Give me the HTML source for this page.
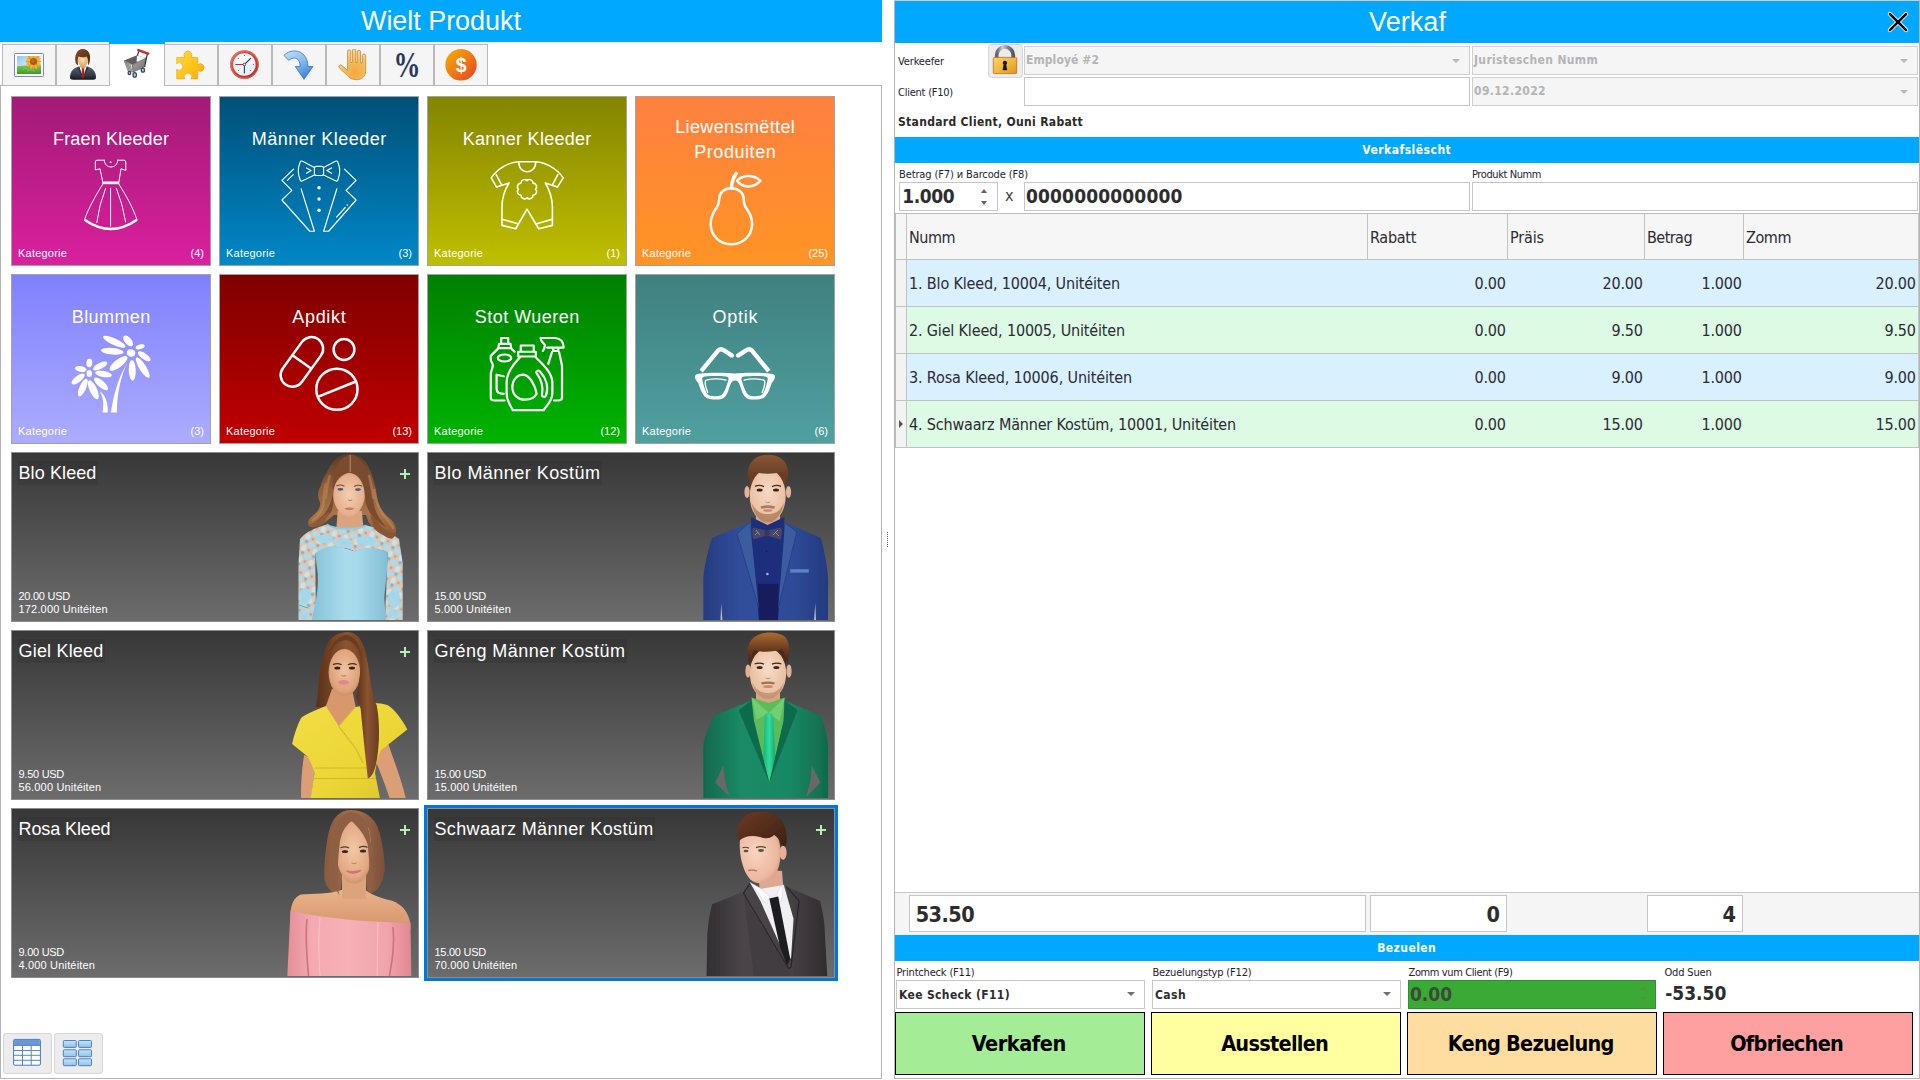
<!DOCTYPE html>
<html lang="lb"><head><meta charset="utf-8"><title>Verkaf</title>
<style>

*{box-sizing:border-box;margin:0;padding:0}
html,body{width:1920px;height:1080px;overflow:hidden;background:#fff}
body{position:relative;font-family:"Liberation Sans",sans-serif}
.a{position:absolute}
.t{position:absolute;white-space:nowrap}
.blue{background:#00a8ff}
.tab{position:absolute;top:44px;width:54px;height:42px;background:#f5f5f5;border:1px solid #b9b9b9}
.tab svg,.tabsel svg{position:absolute;left:10px;top:4px;width:32px;height:32px}
.tabsel{position:absolute;left:110px;top:44px;width:54px;height:42px;background:#fff}
.tabsel svg{left:11px;top:5px}
.cat{position:absolute;width:200px;height:170px;border:1px solid #a3a3a3}
.cat svg{position:absolute;left:0;top:0;width:198px;height:168px}
.prod{position:absolute;width:408px;height:170px;border:1px solid #8d8d8d;background:linear-gradient(#383838,#6c6c6c);overflow:hidden}
.prod svg{position:absolute;right:0;top:0;height:168px}
.lbl{position:absolute;background:rgba(30,30,30,.16)}
.inp{position:absolute;height:29px;background:#fff;border:1px solid #c6c6c6}
.dis{background:#f5f5f5;border-color:#cfcfcf}
.btn{position:absolute;top:1012px;width:250px;height:63px;border:1px solid #000}
.sbtn{position:absolute;background:#ececec;border:1px solid #d6d6d6;border-radius:3px}
.hl{position:absolute;height:1px;background:#c2c2c2}
.vl{position:absolute;width:1px;background:#c2c2c2}
.arr{position:absolute;width:0;height:0;border-left:4px solid transparent;border-right:4px solid transparent;border-top:4px solid #707070}

</style></head>
<body>
<div class="a blue" style="left:0;top:0;width:882px;height:42px"></div>
<div class="a" style="left:0;top:85px;width:882px;height:994px;border:1px solid #b4b4b4"></div>
<div class="tab" style="left:2px"><svg viewBox="0 0 32 32"><defs><clipPath id="pclip"><rect x="4" y="7" width="24" height="18"/></clipPath><linearGradient id="psky" x1="0" y1="0" x2="1" y2="1"><stop offset="0" stop-color="#8cc4f2"/><stop offset=".6" stop-color="#e4f2fc"/></linearGradient><linearGradient id="pgr" x1="0" y1="0" x2="0" y2="1"><stop offset="0" stop-color="#7ec850"/><stop offset="1" stop-color="#3f9a28"/></linearGradient></defs>
<rect x="1.5" y="4.5" width="29" height="23" rx="1" fill="#fff" stroke="#7887c8"/>
<rect x="4" y="7" width="24" height="18" fill="url(#psky)"/>
<path d="M4 17.5C10 15.5 20 17 28 16V25H4Z" fill="url(#pgr)"/>
<g clip-path="url(#pclip)"><ellipse cx="20.5" cy="7.3" rx="1.2" ry="2.8" fill="#f09a28" transform="rotate(0.0 20.5 12.4)"/><ellipse cx="20.5" cy="7.3" rx="1.2" ry="2.8" fill="#f7b535" transform="rotate(22.5 20.5 12.4)"/><ellipse cx="20.5" cy="7.3" rx="1.2" ry="2.8" fill="#f09a28" transform="rotate(45.0 20.5 12.4)"/><ellipse cx="20.5" cy="7.3" rx="1.2" ry="2.8" fill="#f7b535" transform="rotate(67.5 20.5 12.4)"/><ellipse cx="20.5" cy="7.3" rx="1.2" ry="2.8" fill="#f09a28" transform="rotate(90.0 20.5 12.4)"/><ellipse cx="20.5" cy="7.3" rx="1.2" ry="2.8" fill="#f7b535" transform="rotate(112.5 20.5 12.4)"/><ellipse cx="20.5" cy="7.3" rx="1.2" ry="2.8" fill="#f09a28" transform="rotate(135.0 20.5 12.4)"/><ellipse cx="20.5" cy="7.3" rx="1.2" ry="2.8" fill="#f7b535" transform="rotate(157.5 20.5 12.4)"/><ellipse cx="20.5" cy="7.3" rx="1.2" ry="2.8" fill="#f09a28" transform="rotate(180.0 20.5 12.4)"/><ellipse cx="20.5" cy="7.3" rx="1.2" ry="2.8" fill="#f7b535" transform="rotate(202.5 20.5 12.4)"/><ellipse cx="20.5" cy="7.3" rx="1.2" ry="2.8" fill="#f09a28" transform="rotate(225.0 20.5 12.4)"/><ellipse cx="20.5" cy="7.3" rx="1.2" ry="2.8" fill="#f7b535" transform="rotate(247.5 20.5 12.4)"/><ellipse cx="20.5" cy="7.3" rx="1.2" ry="2.8" fill="#f09a28" transform="rotate(270.0 20.5 12.4)"/><ellipse cx="20.5" cy="7.3" rx="1.2" ry="2.8" fill="#f7b535" transform="rotate(292.5 20.5 12.4)"/><ellipse cx="20.5" cy="7.3" rx="1.2" ry="2.8" fill="#f09a28" transform="rotate(315.0 20.5 12.4)"/><ellipse cx="20.5" cy="7.3" rx="1.2" ry="2.8" fill="#f7b535" transform="rotate(337.5 20.5 12.4)"/></g>
<circle cx="20.5" cy="12.4" r="3.5" fill="#a85a1e"/><circle cx="20" cy="11.8" r="2" fill="#c27530" opacity=".7"/>
<path d="M10 21Q13 17.5 15.5 21M14 22.5Q18 19 22 22.5" stroke="#8fcf6a" stroke-width=".8" fill="none" opacity=".8"/>
</svg></div>
<div class="tab" style="left:56px"><svg viewBox="0 0 32 32"><defs><linearGradient id="ubody" x1="0" y1="0" x2="0" y2="1"><stop offset="0" stop-color="#5a6672"/><stop offset=".7" stop-color="#303842"/><stop offset="1" stop-color="#14181c"/></linearGradient><radialGradient id="uface" cx=".45" cy=".4" r=".7"><stop offset="0" stop-color="#fbdcae"/><stop offset="1" stop-color="#d9a066"/></radialGradient><linearGradient id="uhair" x1="0" y1="0" x2="1" y2="1"><stop offset="0" stop-color="#8a4a22"/><stop offset="1" stop-color="#4a2410"/></linearGradient></defs>
<path d="M3 28.5C3 22 7 18.6 12 17.4L16 16.8L20 17.4C25 18.6 29 22 29 28.5Q29 30.7 26 30.7H6Q3 30.7 3 28.5Z" fill="url(#ubody)"/>
<path d="M12.2 17.6L16 29L19.8 17.6L16 16.6Z" fill="#fff"/>
<path d="M14.6 18.6H17.4L17 20.6L17.9 27.3L16 29.6L14.1 27.3L15 20.6Z" fill="#c01818"/>
<path d="M12.2 17.4L10.6 19.2L16 29.4ZM19.8 17.4L21.4 19.2L16 29.4Z" fill="#2c343e"/>
<path d="M13.3 14.5H18.7V18.2L16 19.6L13.3 18.2Z" fill="#d9a066"/>
<ellipse cx="16" cy="11.6" rx="5" ry="5.9" fill="url(#uface)"/>
<path d="M8.6 13.5C7 6 10.5 0.2 15.6 0.1C21 0 24.6 5 22.6 13.2C22.4 14.5 21.6 15.6 21 16.2C21.5 12 21 9.5 19.6 7.4C17 8.6 13.5 8.4 11.6 7.6C10.6 10 10.5 13 11.2 16.4C10 15.8 8.9 14.8 8.6 13.5Z" fill="url(#uhair)"/>
</svg></div>
<div class="tab" style="left:164px"><svg viewBox="0 0 32 32"><defs><linearGradient id="pz" x1="0" y1="0" x2="1" y2="1"><stop offset="0" stop-color="#ffd84a"/><stop offset=".5" stop-color="#ffc61a"/><stop offset="1" stop-color="#f7a810"/></linearGradient></defs>
<path fill-rule="evenodd" d="M1.7 8.5H9.9A3.9 3.9 0 1 1 15.9 8.5H22.7V15.6A3.9 3.9 0 1 1 22.7 21.6V29.9H16A3.7 3.7 0 1 0 9.8 29.9H1.7V20.3A3.7 3.7 0 1 0 1.7 14.7Z" fill="url(#pz)" stroke="#e2a210" stroke-width=".6"/>
</svg></div>
<div class="tab" style="left:218px"><svg viewBox="0 0 32 32"><defs><radialGradient id="ckf" cx=".4" cy=".35" r=".7"><stop offset="0" stop-color="#fff"/><stop offset="1" stop-color="#dfeaf6"/></radialGradient><linearGradient id="ckr" x1="0" y1="0" x2="1" y2="1"><stop offset="0" stop-color="#e8665a"/><stop offset="1" stop-color="#c0241c"/></linearGradient></defs>
<circle cx="15.4" cy="15.5" r="12.8" fill="url(#ckf)" stroke="url(#ckr)" stroke-width="3.1"/>
<circle cx="15.4" cy="15.5" r="13.9" fill="none" stroke="#e8847a" stroke-width=".7" opacity=".8"/>
<g fill="#3a4660"><circle cx="15.4" cy="6.4" r=".5"/><circle cx="24.4" cy="15.5" r=".5"/><circle cx="9.4" cy="9.3" r=".5"/><circle cx="9.4" cy="21.4" r=".5"/><circle cx="21.4" cy="21.4" r=".5"/></g>
<path d="M15.4 15.5H6.2" stroke="#cf2a24" stroke-width="1.1"/>
<path d="M15.4 15.5L21.9 9.1M15.4 15.5V24.5" stroke="#2c3a58" stroke-width="1.1"/>
<circle cx="15.4" cy="15.5" r="1.3" fill="#fff" stroke="#2c3a58" stroke-width=".8"/>
</svg></div>
<div class="tab" style="left:272px"><svg viewBox="0 0 32 32"><defs><linearGradient id="arw" x1="0" y1="0" x2=".6" y2="1"><stop offset="0" stop-color="#c4e2fa"/><stop offset=".5" stop-color="#8cc0ee"/><stop offset="1" stop-color="#3f86d6"/></linearGradient></defs>
<path d="M0.9 6.3C5 2.6 9 1.6 13 2C20 2.8 25 9 25 17.5H30L21 30.4L12.3 17.5H17.1C17 12.5 15 9.6 12.4 9.1C10 8.7 7.5 9.8 5.6 11.3Z" fill="url(#arw)" stroke="#3f74c4" stroke-width=".8" stroke-linejoin="round"/>
</svg></div>
<div class="tab" style="left:326px"><svg viewBox="0 0 32 32"><defs><radialGradient id="hnd" cx=".6" cy=".75" r=".7"><stop offset="0" stop-color="#f0a83c"/><stop offset=".6" stop-color="#f6be62"/><stop offset="1" stop-color="#fbd694"/></radialGradient></defs>
<path d="M10.6 21.4V2.4A1.55 1.55 0 0 1 13.75 2.4V13.5H15.4V1.6A1.7 1.7 0 0 1 18.8 1.6V13.5H20.2V3A1.7 1.7 0 0 1 23.6 3V14H25.3V6.4A1.7 1.7 0 0 1 28.65 6.4V22C28.65 27 25 30.7 19.6 30.7C15 30.7 12.5 29 10.5 26.6L2.4 18.9A1.6 1.6 0 0 1 4.8 16.5Z" fill="url(#hnd)" stroke="#c27a22" stroke-width=".7" stroke-linejoin="round"/>
</svg></div>
<div class="tab" style="left:380px"><svg viewBox="0 0 32 32"><text x="16" y="28.4" text-anchor="middle" font-family="'Liberation Serif',serif" font-weight="bold" font-size="35.5" fill="#2b3a5e" textLength="27" lengthAdjust="spacingAndGlyphs">%</text></svg></div>
<div class="tab" style="left:434px"><svg viewBox="0 0 32 32"><defs><linearGradient id="dol" x1=".1" y1=".15" x2=".9" y2=".9"><stop offset="0" stop-color="#f2a406"/><stop offset=".5" stop-color="#ee7a18"/><stop offset="1" stop-color="#e84a22"/></linearGradient></defs>
<circle cx="16" cy="15.8" r="15.7" fill="url(#dol)"/>
<text x="16.1" y="22.6" text-anchor="middle" font-family="'Liberation Sans',sans-serif" font-weight="bold" font-size="19.5" fill="#fff">$</text>
</svg></div>
<div class="a blue" style="left:109px;top:42px;width:56px;height:2px"></div>
<div class="tabsel"><svg viewBox="0 0 32 32"><defs><linearGradient id="cfr" x1="0" y1="0" x2="1" y2="0"><stop offset="0" stop-color="#9a9a9a"/><stop offset="1" stop-color="#f0f0f0"/></linearGradient><linearGradient id="csd" x1="0" y1="0" x2="1" y2="1"><stop offset="0" stop-color="#a8a8a8"/><stop offset="1" stop-color="#6e6e6e"/></linearGradient></defs>
<path d="M3.1 11.6L16 6.25L25 9.1L11.5 15.8Z" fill="#5d5d5d"/>
<path d="M16 6.25L25 9.1L23.6 15.2L15.6 12.4Z" fill="#f2f2f2"/>
<path d="M3.1 11.6L11.5 15.8L12.1 23.1L7 22Z" fill="url(#cfr)" stroke="#4a4a4a" stroke-width=".5"/>
<path d="M11.5 15.8L25 9.1L22.7 18.6L12.1 23.1Z" fill="url(#csd)" stroke="#4a4a4a" stroke-width=".5"/>
<path d="M5 13L8.3 21.6M6.8 13.8L9.6 22M8.8 14.8L10.9 22.5" stroke="#6a6a6a" stroke-width=".7"/>
<path d="M17.7 2.3L16.4 6.6M26.3 5L23.6 18" stroke="#2e2e36" stroke-width="1.2"/>
<path d="M17.3 1.2L27.3 4.6" stroke="#c8161d" stroke-width="2.3" stroke-linecap="round"/>
<path d="M17.6 .9L27 4" stroke="#e85a5a" stroke-width=".6" stroke-linecap="round"/>
<g stroke="#33485e" stroke-width="1.3" fill="#b4cfe8"><ellipse cx="8.4" cy="24" rx="1.3" ry="1.7"/><ellipse cx="13.75" cy="25.9" rx="1.7" ry="2.2"/><ellipse cx="21.9" cy="21.2" rx="1.6" ry="2"/></g>
</svg></div>
<div class="cat" style="left:11px;top:96px;background:linear-gradient(#a21a76,#da209e)"><svg viewBox="0 0 198 168" fill="none" stroke="#fff" stroke-width="1.0" stroke-linecap="round" stroke-linejoin="round" >
<path d="M92.3 63.2H85Q83.3 63.2 83.3 65V73L88 71.75L90.7 84.7M105.7 63.2H112Q113.8 63.2 113.8 65V73.4L109 71.75L106.9 84.7M92.3 63.2C92.3 72.4 105.7 72.4 105.7 63.2"/>
<rect x="90.3" y="84.5" width="17" height="2.7" fill="#fff" stroke="none"/>
<path d="M90.7 87.2C84 98 76 112 72.75 122.2M106.9 87.2C114 98 121.5 112 124.8 122.2M98.6 91.3V129.2M93.6 91.3Q87 108 84.8 125.5M104.4 91.3Q111 108 113.6 125"/>
<path d="M73.3 123.3Q98.75 140.8 124.2 123.3" stroke-width="2.6"/>
<circle cx="98.6" cy="65.2" r="0.9" fill="#fff" stroke="none"/>
</svg></div>
<div class="cat" style="left:219px;top:96px;background:linear-gradient(#005078,#0088c8)"><svg viewBox="0 0 198 168" fill="none" stroke="#fff" stroke-width="1.15" stroke-linecap="round" stroke-linejoin="round" >
<path d="M94.4 70.5L82.6 64.3Q80.6 63.3 80 65.5Q76.6 73.8 80 82.5Q80.6 84.8 82.6 83.7L94.4 78M103.6 70.5L115.4 64.3Q117.4 63.3 118 65.5Q121.4 73.8 118 82.5Q117.4 84.8 115.4 83.7L103.6 78"/>
<rect x="94.4" y="69.3" width="9.2" height="9.2" rx="2"/>
<path d="M86.5 70.9L91.1 73.4L86.5 76.3M111.5 70.9L106.9 73.4L111.5 76.3"/>
<path d="M73.6 72.2L61.9 83.4L71.9 93.4L61.9 103L89.8 134.25H94.4L81.1 91.75M73.2 77.6L67.3 83.4"/>
<path d="M124.4 72.2L136.1 83.4L126.1 93.4L136.1 103L108.6 134.25H103.6L116.9 91.75M116.5 120.1L125.25 110.5"/>
<g fill="#fff" stroke="none"><circle cx="99" cy="90.7" r="1.7"/><circle cx="99" cy="102" r="1.7"/><circle cx="99" cy="113.2" r="1.7"/><circle cx="127.3" cy="108" r="0.8"/></g>
</svg></div>
<div class="cat" style="left:427px;top:96px;background:linear-gradient(#848400,#bfbf00)"><svg viewBox="0 0 198 168" fill="none" stroke="#fff" stroke-width="1.6" stroke-linecap="round" stroke-linejoin="round" >
<path d="M90.7 64.7C80 65.5 69.5 71.5 63.2 80.9L68.6 90.1L81.1 85.9C76 94 74 102 74 110V128.4L87.75 131.75L99 112.2L110.7 131.75L124.4 128.4V110C124.4 102 122 94 117.3 85.9L129.4 90.1L135.25 80.9C129 71.5 118 65.5 107.75 64.7Z"/>
<path d="M90.7 64.7C90.7 78 107.75 78 107.75 64.7M68.2 77.6L73.2 87.2M129.8 77.6L124.8 87.2M74 122.2L89.8 126.75M124.4 122.2L108.6 126.75"/>
<path d="M107.60 92.20A3.6 3.6 0 0 1 105.08 98.28A3.6 3.6 0 0 1 99.00 100.80A3.6 3.6 0 0 1 92.92 98.28A3.6 3.6 0 0 1 90.40 92.20A3.6 3.6 0 0 1 92.92 86.12A3.6 3.6 0 0 1 99.00 83.60A3.6 3.6 0 0 1 105.08 86.12A3.6 3.6 0 0 1 107.60 92.20Z"/>
</svg></div>
<div class="cat" style="left:635px;top:96px;background:linear-gradient(#ff8040,#ff9424)"><svg viewBox="0 0 198 168" fill="none" stroke="#fff" stroke-width="2.5" stroke-linecap="round" stroke-linejoin="round" >
<path d="M95.25 91.3C88 91.3 83.2 96 83.2 102C83.2 106 83 107 81 110C77 116 74.7 120 74.7 127C74.7 139 84 147.2 95.25 147.2C106.5 147.2 116.1 139 116.1 127C116.1 120 113.5 116 109.5 110C107.7 107 107.75 106 107.75 102C107.75 96 102.5 91.3 95.25 91.3Z"/>
<path d="M95.3 90.8C95.8 85 97.5 80 100.2 76.6" stroke-width="3.4"/>
<path d="M101.1 83.8C106 77.5 117.5 77 124.4 83.8C118 91.5 106 91 101.1 83.8Z"/>
</svg></div>
<div class="cat" style="left:11px;top:274px;background:linear-gradient(#8080ff,#acacff)"><svg viewBox="0 0 198 168" fill="none" stroke="#fff" stroke-width="1.1" stroke-linecap="round" stroke-linejoin="round" ><g fill="#fff" stroke="none"><ellipse cx="119" cy="78" rx="4.3" ry="3.6" transform="rotate(20 119 78)"/><ellipse cx="102.3" cy="66.75" rx="12.2" ry="3.2" transform="rotate(25 102.3 66.75)"/><ellipse cx="116.1" cy="65.9" rx="6.5" ry="3.4" transform="rotate(50 116.1 65.9)"/><ellipse cx="128.2" cy="71.75" rx="4.6" ry="2.4" transform="rotate(-15 128.2 71.75)"/><ellipse cx="100.25" cy="76.3" rx="11.4" ry="3.3" transform="rotate(5 100.25 76.3)"/><ellipse cx="132.3" cy="81.3" rx="7.5" ry="2.9" transform="rotate(35 132.3 81.3)"/><ellipse cx="106.5" cy="88.4" rx="11" ry="3.9" transform="rotate(-38 106.5 88.4)"/><ellipse cx="120.25" cy="95.3" rx="10.4" ry="3.5" transform="rotate(88 120.25 95.3)"/><ellipse cx="130.7" cy="92.6" rx="11.8" ry="3.4" transform="rotate(58 130.7 92.6)"/><ellipse cx="77.3" cy="98.4" rx="2.7" ry="3.5" transform="rotate(0 77.3 98.4)"/><ellipse cx="77.3" cy="88" rx="4.2" ry="2.9" transform="rotate(95 77.3 88)"/><ellipse cx="88.2" cy="90.9" rx="7.9" ry="3" transform="rotate(-27 88.2 90.9)"/><ellipse cx="68.75" cy="94" rx="5.8" ry="2.8" transform="rotate(10 68.75 94)"/><ellipse cx="91.5" cy="99" rx="8.5" ry="3" transform="rotate(10 91.5 99)"/><ellipse cx="66.1" cy="104" rx="7.9" ry="3.2" transform="rotate(-37 66.1 104)"/><ellipse cx="70.8" cy="112.6" rx="9.6" ry="3.3" transform="rotate(-66 70.8 112.6)"/><ellipse cx="81.3" cy="114.8" rx="10.3" ry="3.6" transform="rotate(65 81.3 114.8)"/><ellipse cx="89" cy="108.8" rx="8.9" ry="3.3" transform="rotate(41 89 108.8)"/><path d="M115.7 87.2C108 100 102 115 99 137.6H104.8C105 118 109 100 115.7 87.2Z"/><path d="M87.3 115.9C91.5 121 92 130 90.4 137.6H95.7C96.5 128 93 119 87.3 115.9Z"/></g></svg></div>
<div class="cat" style="left:219px;top:274px;background:linear-gradient(#800000,#c00000)"><svg viewBox="0 0 198 168" fill="none" stroke="#fff" stroke-width="2.5" stroke-linecap="round" stroke-linejoin="round" >
<rect x="70.2" y="58.95" width="23.4" height="55.9" rx="11.7" transform="rotate(36 81.9 86.9)"/>
<path d="M72.75 80.5L91.1 93.4M99 121.3L135.25 106.75"/>
<circle cx="124" cy="74.5" r="10.4"/><circle cx="116.9" cy="114.25" r="20.6"/>
</svg></div>
<div class="cat" style="left:427px;top:274px;background:linear-gradient(#008000,#00b400)"><svg viewBox="0 0 198 168" fill="none" stroke="#fff" stroke-width="2.2" stroke-linecap="round" stroke-linejoin="round" >
<path d="M92.75 76.75V70.5H105.7V76.75M90.25 76.75H107.75V81.5H90.25ZM92.3 81.75C86 89 78.6 97 78.6 108V118C78.6 126 82 130 84.8 135.1H115.7C119 130 124.4 126 124.4 118V108C124.4 97 114 89 107.3 81.75"/>
<path d="M95.7 99.7C88 99.7 84.4 106 84.4 112C84.4 120 90 124.7 97 124.7C103 124.7 107 122 108.6 118.8C107 110 102 101 95.7 99.7Z"/>
<path d="M108.6 98.2C107.6 96.2 110.2 94.6 112 96.6C118 103 121 112 118 120.5C117 122.6 113.5 122 114 119.5C115.5 112 113.5 105 108.6 98.2Z"/>
<path d="M73.2 68.5V63H80.25V68.5M71 68.8H82.5L83.2 73.2H70.25ZM70.25 73.4L62.75 80.9V84C62.75 87 64.8 88 64.8 90.5C64.8 93 62.75 96 62.75 99.7V122.2Q62.75 125.5 66 125.5H76.5M83.2 73.4L86.5 76.75"/>
<ellipse cx="76.5" cy="83" rx="6.7" ry="3.5"/>
<path d="M75.7 101.3L68.6 99.7V114Q68.6 118.8 75.7 118.8"/>
<path d="M112.5 63H127Q135.5 63.5 135.7 72.6H119M112.5 63L113.5 66L117 70Q116.5 74 114.8 75.9M125.25 73V76H130.25V73M124 77.2L120.25 88.8M131.1 77.2L134 90.5V122.2Q134 125.5 130.25 125.5H126.1"/>
</svg></div>
<div class="cat" style="left:635px;top:274px;background:linear-gradient(#408080,#50a0a0)"><svg viewBox="0 0 198 168" fill="none" stroke="#fff" stroke-width="1.3" stroke-linecap="round" stroke-linejoin="round" >
<path fill="#fff" stroke="none" fill-rule="evenodd" d="M59 101.8C59 99.8 60.5 99 63 98.7C76 97.2 90 97.6 99 98.6C108 97.6 122 97.2 135 98.7C137.5 99 139 99.8 139 101.8C139 104.5 137.5 106 135.7 108C134 113 132.5 118 129 122C126 124.6 118 125 113.2 124.25C109 123.2 107 119.5 105.8 116C104.5 112 103.5 108.5 101.8 106.6C100.2 105 97.8 105 96.2 106.6C94.5 108.5 93.5 112 92.2 116C91 119.5 89 123.2 84.8 124.25C80 125 72 124.6 69 122C65.5 118 64 113 62.3 108C60.5 106 59 104.5 59 101.8ZM66.3 104.6C65.8 102.6 67 101.6 69 101.4C76 100.8 84 100.8 90 101.6C92.3 101.9 93 103.2 92.4 105C91 109.5 89.5 114.5 87.3 118C85.8 120.5 83.5 121.2 80 121.2C76.5 121.3 72.8 121.2 71 118.8C68.8 115 67.2 109.5 66.3 104.6ZM131.7 104.6C132.2 102.6 131 101.6 129 101.4C122 100.8 114 100.8 108 101.6C105.7 101.9 105 103.2 105.6 105C107 109.5 108.5 114.5 110.7 118C112.2 120.5 114.5 121.2 118 121.2C121.5 121.3 125.2 121.2 127 118.8C129.2 115 130.8 109.5 131.7 104.6Z"/>
<path d="M71.8 117.5C69.5 112 68.5 108 69.6 105.3C76 103.6 85 103.8 90 105.2M126.2 117.5C128.5 112 129.5 108 128.4 105.3C122 103.6 113 103.8 108 105.2" stroke-width="1.3"/>
<path d="M65.2 96.2L82 75.6Q84.8 73 88 75.4L96 80.6M132.8 96.2L116 75.6Q113.2 73 110 75.4L102 80.6" stroke-width="4.3" stroke-linecap="butt"/>
<circle cx="96" cy="80.6" r="2.15" fill="#fff" stroke="none"/><circle cx="102" cy="80.6" r="2.15" fill="#fff" stroke="none"/>
</svg></div>
<div class="a" style="left:424px;top:805px;width:414px;height:176px;border:3px solid #0078d7"></div>
<div class="prod" style="left:11px;top:452px"><div class="lbl" style="left:6px;top:8px;width:80px;height:24px"></div><svg viewBox="0 0 140 168" style="width:140px"><defs><filter id="pblur" x="-5%" y="-5%" width="110%" height="110%"><feGaussianBlur stdDeviation="0.45"/></filter>
<linearGradient id="b1h" x1="0" y1="0" x2="0" y2="1"><stop offset="0" stop-color="#5c3a26"/><stop offset=".35" stop-color="#8a5a38"/><stop offset=".7" stop-color="#a87448"/><stop offset="1" stop-color="#8a5630"/></linearGradient>
<radialGradient id="b1f" cx=".5" cy=".5" r=".62"><stop offset="0" stop-color="#f4ceb2"/><stop offset=".7" stop-color="#e6b08e"/><stop offset="1" stop-color="#c48a64"/></radialGradient>
<pattern id="b1lace" width="7" height="7" patternUnits="userSpaceOnUse" patternTransform="rotate(20) scale(1.7)"><rect width="7" height="7" fill="#ecc0a4"/><ellipse cx="2" cy="2.2" rx="2.3" ry="1.6" fill="#a8dcf0"/><ellipse cx="5.4" cy="5.3" rx="1.5" ry="2" fill="#c0e6f4"/><circle cx="5.6" cy="1.2" r="1" fill="#78b8d4"/><circle cx="1.6" cy="5.6" r=".8" fill="#78b8d4"/></pattern>
<linearGradient id="b1d" x1="0" y1="0" x2="1" y2="0"><stop offset="0" stop-color="#84c2d8"/><stop offset=".45" stop-color="#aadcec"/><stop offset=".6" stop-color="#a6daea"/><stop offset="1" stop-color="#82bed6"/></linearGradient>
</defs><g filter="url(#pblur)">
<path d="M71.3 .7C66 1 61 3 57.2 6.5C53 11 50 16 48.8 19.8C46 24 44 28 43 32.3C41 36 40 39 40.1 42.3C40 46 42 48 42.2 50.7C42 54 40.5 57 38.8 59C36 62 33 64 31.75 65.7C30 68 29.6 70.5 30.5 72.3C32 74 34.5 74.4 36.3 74C40 73.5 43 72 45.5 70.7L56 62H88L90.5 69C92 72 94 74 96.3 75.7C99 78.5 102 80.5 105.5 82.3C108 84 111 86 113.8 85.7C116.5 84.5 118 82 118 79C118.3 76 117.5 73 116.3 70.7C114 67 111 64.5 108 62.3C105 59 102.5 56 101.3 52.3C100 49 99.3 45.5 98.8 42.3C98.5 38 97.5 34 96.3 30.7C95 25 93.5 20 91.3 15.7C89.5 11 87.5 8 84.7 5.7C81 2.5 76 .7 71.3 .7Z" fill="url(#b1h)"/>
<path d="M59.7 58H83.8L86 80H58Z" fill="#dca47e"/>
<path d="M54.7 40C54.5 30 58 21 70.9 19.8C83.5 21 87.4 30 87.2 40C87 50 82 62 70.9 64.8C60 62 55 50 54.7 40Z" fill="url(#b1f)"/>
<path d="M71.8 1.5C63 4 57 12 55.5 22C54 30 54.8 36 54.6 42C53 48 52 52 49 57C46 62 42 66 37 69C44 68 50 64 53.5 58C55.4 53 55.3 48 55.2 42C55.6 31 60 22.5 71.5 19.2C81 21.5 86.4 30 86.8 42C87 48 88.5 54 91.5 59C95 65 101 70 108 74C103 68 99 62 97 56C95 50 95 44 94 38C92.5 28 90 18 85 10C82 5 77 2 71.8 1.5Z" fill="#7a4c2e"/>
<path d="M48 30C45 40 47 48 44 56C42 61 38 65 34 68M96 36C97 46 100 54 105 61C108 66 113 70 115.5 76M52 22C49 30 49 38 47.5 46M91 22C93 30 94 38 95.5 46" stroke="#c89458" stroke-width="2.6" fill="none" opacity=".45"/>
<path d="M72.2 2V19" stroke="#d8a878" stroke-width=".9" opacity=".8"/>
<ellipse cx="62.4" cy="36.3" rx="3" ry="1.4" fill="#4a6078"/><ellipse cx="80" cy="36.6" rx="3" ry="1.4" fill="#4a6078"/>
<path d="M58.4 33Q62.4 31 66.4 33.2M76 33.4Q80 31.2 84.2 33.2" stroke="#7a4c2e" stroke-width="1.1" fill="none"/>
<path d="M70.4 46.6Q72.2 48.6 74.2 46.6" stroke="#c08860" stroke-width="1.1" fill="none"/>
<path d="M66 55.4Q71.3 53.4 76.8 55.4Q71.3 59 66 55.4Z" fill="#c87870"/>
<path d="M22 86C28 78 40 74 48.8 71.5C58 77 80 78 88 72.3C98 75 112 78 121 86L124.7 110V167H107L109.7 99.8C100 94 84 95 76.3 98.2C68 94 50 92 37.2 100.7L38 167H20.5V110Z" fill="url(#b1lace)"/>
<path d="M37.2 100.7C42 96 48 93.8 53 93.2C62 93.5 70 96 76.3 98.2C82 95.5 88 94.6 93 94.8C100 95 106 97 109.7 99.8L108.8 120.7C108 130 106.5 138 106.3 145.7L108 167H33.8L38.8 142.3C40 134 40 128 39.7 120.7Z" fill="url(#b1d)"/>
<path d="M48.8 71.5C56 76.5 80 77.5 88 72.3" stroke="#8ccce4" stroke-width="2" fill="none"/>
<g fill="#a4d8ec" opacity=".9"><ellipse cx="47" cy="86" rx="9" ry="4.5"/><ellipse cx="66" cy="90" rx="9" ry="5"/><ellipse cx="88" cy="88" rx="10" ry="5"/><ellipse cx="27" cy="143" rx="6" ry="8"/><ellipse cx="116" cy="146" rx="6.5" ry="9"/><ellipse cx="26" cy="161" rx="5" ry="5"/><ellipse cx="115" cy="161" rx="5" ry="5"/></g>
<path d="M21 152L30 155" stroke="#6aa8c4" stroke-width="1" fill="none"/>
<path d="M96.3 75.7C99 78.5 102 80.5 105.5 82.3C108 84 111 86 113.8 85.7C116.5 84.5 118 82 118 79C112 82 104 76 98 66L92 62Z" fill="#8a5630"/>
<path d="M45.5 70.7C41 73 36 75 31 72C36 71 42 67 46 62L52 58Z" fill="#8e5a34"/>
</g></svg></div>
<div class="a" style="left:400px;top:473px;width:10px;height:2px;background:#b4f0b4"></div><div class="a" style="left:404px;top:469px;width:2px;height:10px;background:#b4f0b4"></div>
<div class="prod" style="left:427px;top:452px"><div class="lbl" style="left:6px;top:8px;width:168px;height:24px"></div><svg viewBox="0 0 140 168" style="width:140px"><defs>
<linearGradient id="m1j" x1="0" y1="0" x2="1" y2="0"><stop offset="0" stop-color="#263c80"/><stop offset=".3" stop-color="#304e9a"/><stop offset=".7" stop-color="#2f4c98"/><stop offset="1" stop-color="#243a80"/></linearGradient>
<radialGradient id="m1f" cx=".5" cy=".4" r=".7"><stop offset="0" stop-color="#f8d8c4"/><stop offset=".7" stop-color="#ecc0a4"/><stop offset="1" stop-color="#c89878"/></radialGradient>
<linearGradient id="m1h" x1="0" y1="0" x2="0" y2="1"><stop offset="0" stop-color="#8a5634"/><stop offset="1" stop-color="#5a3420"/></linearGradient>
</defs><g filter="url(#pblur)">
<ellipse cx="53" cy="39" rx="2.6" ry="6" fill="#e4b498"/><ellipse cx="94.5" cy="39" rx="2.6" ry="6" fill="#e4b498"/>
<path d="M62 58H86V76H62Z" fill="#d8a888"/>
<ellipse cx="73.7" cy="22" rx="19.4" ry="20" fill="#6a3e26"/><ellipse cx="73.7" cy="43" rx="18" ry="26.5" fill="url(#m1f)"/>
<path d="M57.5 50C60 62 66 69.5 73.7 69.5C81 69.5 87.5 62 90 50C86 58 82 61 73.7 61C66 61 62 58 57.5 50Z" fill="#a87858" opacity=".75"/>
<path d="M66.5 53.5Q73.7 51 81 53.5L80 56Q73.7 54 67.5 56Z" fill="#9a6a4c" opacity=".8"/>
<ellipse cx="73.7" cy="57.5" rx="4.6" ry="1.3" fill="#c88878"/>
<path d="M55 31C51 17 56 6 66 3C74 0 86 2 91 9C95 15 95 24 92.5 32C92 26 90 22 87 19C80 21 68 22 60 18C57 22 56 26 55 31Z" fill="url(#m1h)"/>
<ellipse cx="65.6" cy="37" rx="3" ry="1.5" fill="#3a2418"/><ellipse cx="82" cy="37" rx="3" ry="1.5" fill="#3a2418"/>
<path d="M61 33.3Q65.5 31.5 70 33.6M78 33.6Q82.5 31.5 87 33.3" stroke="#4a2c1a" stroke-width="1.3" fill="none"/>
<path d="M71.5 49Q73.7 50.5 76 49" stroke="#c09070" stroke-width="1" fill="none"/>
<path d="M18 85L55 69.5L73.5 90L91.5 69.5L127 85C131 100 134 118 134 126V167H9.3V126C9.3 118 13 100 18 85Z" fill="url(#m1j)"/>
<path d="M57 64L73.5 72L90.5 64L89.8 88L84 167H65L57.6 88Z" fill="#1e2e7c"/>
<path d="M64 130.7H84.5L84 167H65Z" fill="#151e5c"/>
<path d="M55.2 69.5L43.1 80.8L64.8 155L57.6 87.2ZM91.4 69.5L102.7 79.2L84.2 155L89.8 87.2Z" fill="#3a5c9e"/>
<path d="M55.2 69.5L43.1 80.8L64.8 155M91.4 69.5L102.7 79.2L84.2 155" stroke="#223a80" stroke-width=".7" fill="none"/>
<path d="M72.9 77.5L58.8 74.5Q57.6 80 59.4 86.4L72.9 82.5L86.6 86.4Q88.6 80 87.4 74.5Z" fill="#4a4668"/>
<path d="M62 77L66 82M79 82L84 77M61 82L64 79M81 79L85 83" stroke="#a89890" stroke-width=".8"/>
<rect x="70.4" y="77.3" width="5" height="5.5" rx="1" fill="#3a3658"/>
<rect x="96.3" y="116.2" width="18.5" height="3.4" fill="#5c84c4"/>
<circle cx="73.4" cy="121" r="1.3" fill="#b0b4c8"/><circle cx="72.6" cy="98" r=".8" fill="#101850"/>
<path d="M27.2 150L26.5 167H28.4ZM121.3 150L122 167H120Z" fill="#b8bcc8"/>
</g></svg></div>
<div class="prod" style="left:11px;top:630px"><div class="lbl" style="left:6px;top:8px;width:87px;height:24px"></div><svg viewBox="0 0 140 168" style="width:140px"><defs>
<linearGradient id="g1h" x1="0" y1="0" x2="1" y2="0"><stop offset="0" stop-color="#5a3018"/><stop offset=".5" stop-color="#8a5430"/><stop offset="1" stop-color="#6a3c20"/></linearGradient>
<radialGradient id="g1f" cx=".5" cy=".45" r=".65"><stop offset="0" stop-color="#f0c4a0"/><stop offset=".7" stop-color="#dea27a"/><stop offset="1" stop-color="#b87850"/></radialGradient>
<linearGradient id="g1d" x1="0" y1="0" x2="1" y2="1"><stop offset="0" stop-color="#f2de44"/><stop offset=".6" stop-color="#ecd636"/><stop offset="1" stop-color="#dcc42c"/></linearGradient>
</defs><g filter="url(#pblur)">
<path d="M69.7 1C60 1 52 6 48 16C43 28 42 42 40.7 53C40 62 39 70 37.8 76L50 76L54 56H82L84 76L99 76C94 66 92.5 50 90 34C88 16 82 1 69.7 1Z" fill="url(#g1h)"/>
<path d="M26.2 124L36 128L36.6 142L33 167H23C23 150 24 136 26.2 124ZM98.7 122L110 112C116 130 124 150 127.7 167H111.5C106 150 100 136 97 128Z" fill="#dc9e74"/>
<path d="M47.9 75.1C38 79 28 83 22.9 87.2C19 95 16 104 14.1 113L30.2 125.9C32 130 35 136 36.6 142L32.6 167H101.9L97 142C98 134 100 126 102.7 119.4L129.3 98.5C124 88 116 78 109.9 74.3C105 72.5 100 72 97 71.9L78 76Z" fill="url(#g1d)"/>
<path d="M60.8 95.3L78 118L85 132M36.6 137H96.5M34.5 147.5H98" stroke="#d2b828" stroke-width="1.1" fill="none"/>
<path d="M47.9 75.1L60.8 95.3L77.7 75.9L74 58H54Z" fill="#d8986c"/>
<ellipse cx="66.4" cy="41.5" rx="15.8" ry="23.6" fill="url(#g1f)"/>
<path d="M50.5 30C52 18 58 10 68 9C76 10 82 18 82.5 30C84 20 80 6 69 4C58 5 50 16 50.5 30Z" fill="#6a3c20"/>
<path d="M82.5 28C83 44 80 58 78 66L82.6 77.5L85.8 110L89.8 147.6C94 146 97 140 99 128C101.5 112 102 92 98.7 74.3C94 66 92.5 50 90 34C88 24 86 20 82.5 16Z" fill="url(#g1h)"/>
<ellipse cx="59.4" cy="37" rx="3" ry="1.5" fill="#3a2418"/><ellipse cx="74" cy="37" rx="3" ry="1.5" fill="#3a2418"/>
<path d="M55 33.6Q59.4 31.4 63.6 33.8M70 33.8Q74.4 31.4 78.6 33.6" stroke="#4a2c1a" stroke-width="1.2" fill="none"/>
<ellipse cx="65.6" cy="51.4" rx="5.6" ry="2.4" fill="#e08890"/>
<path d="M63.5 44.5Q65.6 46 68 44.5" stroke="#b87850" stroke-width="1" fill="none"/>
<path d="M60.8 95.3L77.7 75.9" stroke="#d8c230" stroke-width="1" fill="none"/>
</g></svg></div>
<div class="a" style="left:400px;top:651px;width:10px;height:2px;background:#b4f0b4"></div><div class="a" style="left:404px;top:647px;width:2px;height:10px;background:#b4f0b4"></div>
<div class="prod" style="left:427px;top:630px"><div class="lbl" style="left:6px;top:8px;width:193px;height:24px"></div><svg viewBox="0 0 140 168" style="width:140px"><defs>
<linearGradient id="m2j" x1="0" y1="0" x2="1" y2="0"><stop offset="0" stop-color="#11684c"/><stop offset=".3" stop-color="#1a8a66"/><stop offset=".7" stop-color="#198864"/><stop offset="1" stop-color="#106a4c"/></linearGradient>
<radialGradient id="m2f" cx=".5" cy=".4" r=".7"><stop offset="0" stop-color="#f8dcc8"/><stop offset=".7" stop-color="#eac0a2"/><stop offset="1" stop-color="#c49474"/></radialGradient>
<linearGradient id="m2h" x1="0" y1="0" x2="0" y2="1"><stop offset="0" stop-color="#b06c30"/><stop offset=".5" stop-color="#6a3c20"/><stop offset="1" stop-color="#3a2418"/></linearGradient>
<linearGradient id="m2t" x1="0" y1="0" x2="1" y2="0"><stop offset="0" stop-color="#14b478"/><stop offset=".5" stop-color="#34dca0"/><stop offset="1" stop-color="#12a870"/></linearGradient>
</defs><g filter="url(#pblur)">
<ellipse cx="54" cy="40" rx="2.6" ry="6.6" fill="#e2b294"/><ellipse cx="95" cy="40" rx="2.6" ry="6.6" fill="#e2b294"/>
<path d="M62 58H86V76H62Z" fill="#d6a684"/>
<ellipse cx="74.3" cy="22" rx="20" ry="20" fill="#4a2c1a"/><ellipse cx="74" cy="42.6" rx="18.2" ry="25.6" fill="url(#m2f)"/>
<path d="M58 52C61 62 67 68 74 68C81 68 87 62 90 52C86 59 81 62 74 62C67 62 62 59 58 52Z" fill="#b08460" opacity=".6"/>
<path d="M67 51.5Q74 49.5 81 51.5L80 53.5Q74 52 68 53.5Z" fill="#8a5c3c" opacity=".8"/>
<ellipse cx="74" cy="55.5" rx="5" ry="1.6" fill="#d08878"/>
<path d="M55.5 34C51 20 54 8 64 4C72 0 84 1 90 5C96 10 97 22 93 34C92.5 27 91 22 88 18C80 21 68 22 60 19C57.5 24 56 28 55.5 34Z" fill="url(#m2h)"/>
<ellipse cx="65.6" cy="36.4" rx="3" ry="1.5" fill="#3a2a20"/><ellipse cx="82.4" cy="36.4" rx="3" ry="1.5" fill="#3a2a20"/>
<path d="M60.6 33Q65.5 31 70 33.2M78 33.2Q82.5 31 87.4 33" stroke="#3a2418" stroke-width="1.3" fill="none"/>
<path d="M71.6 47Q74 48.5 76.4 47" stroke="#c09070" stroke-width="1" fill="none"/>
<path d="M19.7 84.8L57.6 69.5L75 92L90.6 69.5L126.9 84.8C131 96 134.1 108 134.1 116.2V167H9.3V116.2C9.3 108 15 96 19.7 84.8Z" fill="url(#m2j)"/>
<path d="M57.6 66.5L74.5 72L90.6 66.5L90 90L75.3 151.7L59 90Z" fill="#5cbc5c"/>
<path d="M57.6 66.5L74.8 82L62.4 88.8ZM90.6 66.5L74.8 82L85.8 90.4Z" fill="#72d070"/>
<path d="M71.6 82.5L78 82.5L79.2 88L81.3 126L75.3 149.2L69.4 126L70.6 88Z" fill="url(#m2t)"/>
<path d="M57.6 69.5L44.7 79.2L75.3 151.7L60 90ZM90.6 69.5L103.5 79.2L75.3 151.7L89.5 90Z" fill="#0f6a4c"/>
<path d="M29.4 134L21.3 151.7L35.8 166L31 150ZM117.6 134L126.4 151.7L112 166L116.5 150Z" fill="#686868"/>
</g></svg></div>
<div class="prod" style="left:11px;top:808px"><div class="lbl" style="left:6px;top:8px;width:94px;height:24px"></div><svg viewBox="0 0 140 168" style="width:140px"><defs>
<linearGradient id="r1h" x1="0" y1="0" x2="1" y2="0"><stop offset="0" stop-color="#8a5a3e"/><stop offset=".5" stop-color="#a06e4e"/><stop offset="1" stop-color="#7c5038"/></linearGradient>
<radialGradient id="r1f" cx=".5" cy=".45" r=".65"><stop offset="0" stop-color="#f2c8a6"/><stop offset=".7" stop-color="#e2a882"/><stop offset="1" stop-color="#be8258"/></radialGradient>
<linearGradient id="r1d" x1="0" y1="0" x2="1" y2="0"><stop offset="0" stop-color="#e48e98"/><stop offset=".2" stop-color="#f4aab0"/><stop offset=".5" stop-color="#f6b0b6"/><stop offset=".8" stop-color="#f2a4ac"/><stop offset="1" stop-color="#e08890"/></linearGradient>
<linearGradient id="r1s" x1="0" y1="0" x2="0" y2="1"><stop offset="0" stop-color="#eab48c"/><stop offset="1" stop-color="#d4946a"/></linearGradient>
</defs><g filter="url(#pblur)">
<path d="M72.9 1C62 1 55 8 51 22C48 36 46 52 46.3 69.5C47 76 52 84 61.6 86.4L64 70H88L89 80.8L92.2 84C100 82 104 76 106.7 61.4C107 48 104 32 101 22C97 8 86 1 72.9 1Z" fill="url(#r1h)"/>
<path d="M22.9 85.6C34 84 52 86 66 80L86 80C96 88 108 90 114.8 92C124 96 130 102 132.5 114.6V120H12.5V104C13 96 16 88 22.9 85.6Z" fill="url(#r1s)"/>
<path d="M64 66H88V90H64Z" fill="#dca47c"/>
<path d="M59 20C56 34 57.5 52 62 62C66 70 70 74.5 76 74.5C82 74.5 87 70 90.5 62C94 52 94 34 91 20C84 10 66 10 59 20Z" fill="url(#r1f)"/>
<path d="M73 3C64 5 58 12 57 26C56 38 57 50 58.4 61.4L55 76L61.6 86.4C58 76 60 50 61.6 36C62.5 26 66 18 73.5 12C80 18 87 26 89.8 36C91 50 93 66 89 80.8L96 70L93.8 58C94 44 93 30 91 22C88 10 82 4 73 3Z" fill="#8e5e42"/>
<ellipse cx="67" cy="42.5" rx="3.1" ry="1.6" fill="#3a2a24"/><ellipse cx="85" cy="42" rx="3.1" ry="1.6" fill="#3a2a24"/>
<path d="M62.5 38.8Q67 36.8 71 39M81 38.6Q85.5 36.4 89.5 38.4" stroke="#5a3a28" stroke-width="1.2" fill="none"/>
<path d="M68.5 62Q75.5 66.5 83 61.5Q75.5 63.5 68.5 62Z" fill="#c87878" stroke="#c87878" stroke-width="1.3"/>
<path d="M73.5 54Q76 55.5 78.5 54" stroke="#be8258" stroke-width="1" fill="none"/>
<path d="M12.5 101.7C30 106 50 108.5 79.3 111.4C100 113 120 113 132.5 114.6L133.3 167H9.3Z" fill="url(#r1d)"/>
<path d="M29 110C27 130 29 150 30.5 167M115 118C117 136 114 152 111.5 167" stroke="#c87480" stroke-width="1.6" fill="none"/>
<path d="M42 109C40 130 41 150 42 167M100 113.5C99 134 99.5 150 99 167" stroke="#fac4c8" stroke-width="1" fill="none"/>
</g></svg></div>
<div class="a" style="left:400px;top:829px;width:10px;height:2px;background:#b4f0b4"></div><div class="a" style="left:404px;top:825px;width:2px;height:10px;background:#b4f0b4"></div>
<div class="prod" style="left:427px;top:808px"><div class="lbl" style="left:6px;top:8px;width:221px;height:24px"></div><svg viewBox="0 0 140 168" style="width:140px"><defs>
<linearGradient id="m3j" x1="0" y1="0" x2="1" y2="0"><stop offset="0" stop-color="#332e32"/><stop offset=".3" stop-color="#4a4448"/><stop offset=".7" stop-color="#464044"/><stop offset="1" stop-color="#302b2f"/></linearGradient>
<radialGradient id="m3f" cx=".4" cy=".4" r=".75"><stop offset="0" stop-color="#f8d4c0"/><stop offset=".7" stop-color="#ecb8a0"/><stop offset="1" stop-color="#c88c74"/></radialGradient>
<linearGradient id="m3h" x1="0" y1="0" x2="1" y2="1"><stop offset="0" stop-color="#6a3a24"/><stop offset="1" stop-color="#3e2014"/></linearGradient>
</defs><g filter="url(#pblur)">
<path d="M64 60L88 62L90 86H66Z" fill="#e0a890"/>
<ellipse cx="89" cy="43.7" rx="3.6" ry="7" fill="#e8b09a"/>
<path d="M46 30C45 42 47 52 50 60C53 68 58 74.3 66 74.3C76 74.3 84 66 86 52C87 40 86 30 82 26C70 22 54 22 46 30Z" fill="url(#m3f)"/>
<path d="M45 32C41 20 44 10 54 5C62 2 76 2 84 8C92 14 94 26 92 37.3L87 36C86 30 83 28 80 26C76 30 72 30 66 28C58 26 50 27 45 32Z" fill="url(#m3h)"/>
<ellipse cx="52" cy="42" rx="2.4" ry="1.3" fill="#4a5a50"/><ellipse cx="67" cy="41.5" rx="3" ry="1.4" fill="#4a5a50"/>
<path d="M48.5 38.8Q52 37.5 55 39.2M62 38.6Q67 36.6 72 38.8" stroke="#6a3a24" stroke-width="1.2" fill="none"/>
<path d="M54 61.5Q58 60.5 63 62" stroke="#c07870" stroke-width="1.5" fill="none"/>
<path d="M18.1 95.3L50.3 82.4L56 74.3L94 120L92.2 77.5L126.1 92C129 104 131 116 130.9 126L133.3 167H12.5L13.3 126C14 114 16 104 18.1 95.3Z" fill="url(#m3j)"/>
<path d="M56 73.5L66 80L89.8 76L99.5 109.8L97 150L85.8 135.5L66.4 92Z" fill="#f0f0f4"/>
<path d="M56 73.5L71.3 93.7L76 88L66 79ZM89.8 75.9L87.4 92L82 87L86 78Z" fill="#fafafc" stroke="#d0d0d8" stroke-width=".5"/>
<path d="M75.3 89.6L84.2 87.5L96.25 150L93 156.5L85.8 137.2Z" fill="#1c1c20"/>
<path d="M56 74.3L49.5 84L94.6 159.7L97 158L105.1 92L92.2 77.5" stroke="#262226" stroke-width="1.1" fill="none"/>
<path d="M49.5 84L94.6 159.7L96 167H60Z" fill="#3e383c" opacity=".5"/>
</g></svg></div>
<div class="a" style="left:816px;top:829px;width:10px;height:2px;background:#b4f0b4"></div><div class="a" style="left:820px;top:825px;width:2px;height:10px;background:#b4f0b4"></div>
<div class="sbtn" style="left:3px;top:1033px;width:49px;height:41px"><svg viewBox="0 0 46 39" style="position:absolute;left:0;top:0;width:46px;height:39px"><rect x="9.6" y="5.4" width="26.8" height="25.8" rx="1.2" fill="#fff" stroke="#3f78c6" stroke-width="1"/><rect x="10.1" y="5.9" width="25.8" height="5.5" fill="#6a98d6"/><path d="M9.6 11.4H36.4M9.6 16.5H36.4M9.6 21.3H36.4M9.6 26.3H36.4M18.5 11.4V31.2M27.2 11.4V31.2" stroke="#4f88d0" stroke-width="1" fill="none"/></svg></div>
<div class="sbtn" style="left:54px;top:1033px;width:49px;height:41px"><svg viewBox="0 0 46 39" style="position:absolute;left:0;top:0;width:46px;height:39px"><defs><linearGradient id="g2f" x1="0" y1="0" x2="0" y2="1"><stop offset="0" stop-color="#c6e4f8"/><stop offset="1" stop-color="#8cc4ea"/></linearGradient></defs><rect x="8.3" y="6.5" width="13" height="6.9" rx="1" fill="url(#g2f)" stroke="#3f74c4" stroke-width=".9"/><rect x="8.3" y="15.8" width="13" height="6.9" rx="1" fill="url(#g2f)" stroke="#3f74c4" stroke-width=".9"/><rect x="8.3" y="24.8" width="13" height="6.9" rx="1" fill="url(#g2f)" stroke="#3f74c4" stroke-width=".9"/><rect x="23.5" y="6.5" width="13" height="6.9" rx="1" fill="url(#g2f)" stroke="#3f74c4" stroke-width=".9"/><rect x="23.5" y="15.8" width="13" height="6.9" rx="1" fill="url(#g2f)" stroke="#3f74c4" stroke-width=".9"/><rect x="23.5" y="24.8" width="13" height="6.9" rx="1" fill="url(#g2f)" stroke="#3f74c4" stroke-width=".9"/></svg></div>
<div class="a" style="left:887px;top:532px;width:1px;height:15px;background:repeating-linear-gradient(#5a5a5a 0 1px,#fff 1px 2px)"></div>
<div class="a" style="left:894px;top:0;width:1026px;height:1079px;border:1px solid #b4b4b4;border-top-color:#d9c9b9"></div>
<div class="a blue" style="left:895px;top:1px;width:1024px;height:42px"></div>
<svg class="a" style="left:1880px;top:4px;width:36px;height:36px" viewBox="0 0 36 36" fill="none" stroke-linecap="round"><path d="M9.9 10L26.1 26.1M26.1 10L9.9 26.1" stroke="#fff" stroke-width="4.2"/><path d="M9.9 10L26.1 26.1M26.1 10L9.9 26.1" stroke="#000" stroke-width="2.5"/></svg>
<div class="sbtn" style="left:988px;top:44px;width:35px;height:34px;border-radius:4px"><svg viewBox="0 0 33 32" style="position:absolute;left:0;top:0;width:33px;height:32px"><defs><linearGradient id="lkb" x1="0" y1="0" x2="1" y2="1"><stop offset="0" stop-color="#fbd66a"/><stop offset=".55" stop-color="#f0b63a"/><stop offset="1" stop-color="#dd9420"/></linearGradient><linearGradient id="lks" x1="0" y1="0" x2="1" y2="0"><stop offset="0" stop-color="#5c646e"/><stop offset=".35" stop-color="#c8ced4"/><stop offset=".7" stop-color="#7a828c"/><stop offset="1" stop-color="#50585f"/></linearGradient></defs><path d="M7.8 13V10.1A8.2 8.2 0 0 1 24.2 10.1V13" fill="none" stroke="url(#lks)" stroke-width="3.8"/><rect x="4.3" y="12.4" width="23.4" height="16.2" rx="1" fill="url(#lkb)" stroke="#b8701c" stroke-width=".8"/><path d="M15.9 15.8A2.1 2.1 0 0 1 17.2 19.6L18.2 25.2H13.6L14.6 19.6A2.1 2.1 0 0 1 15.9 15.8Z" fill="#1a1830"/></svg></div>
<div class="inp dis" style="left:1024px;top:46px;width:446px"></div>
<div class="inp dis" style="left:1472px;top:46px;width:446px"></div>
<div class="inp" style="left:1024px;top:77px;width:446px"></div>
<div class="inp dis" style="left:1472px;top:77px;width:446px"></div>
<div class="arr" style="left:1452px;top:59px;border-top-color:#b9b9b9"></div>
<div class="arr" style="left:1900px;top:59px;border-top-color:#b9b9b9"></div>
<div class="arr" style="left:1900px;top:90px;border-top-color:#b9b9b9"></div>
<div class="a blue" style="left:895px;top:137px;width:1024px;height:26px"></div>
<div class="inp" style="left:899px;top:182px;width:99px"></div>
<div class="inp" style="left:1024px;top:182px;width:446px"></div>
<div class="inp" style="left:1472px;top:182px;width:446px"></div>
<div class="arr" style="left:981px;top:200.5px;border-width:4px 3.5px 0 3.5px;border-top-color:#606060"></div>
<div class="arr" style="left:981px;top:189px;border-width:0 3.5px 4px 3.5px;border-top-color:transparent;border-bottom:4px solid #606060"></div>
<div class="a" style="left:895px;top:213px;width:1024px;height:235px;border:1px solid #bdbdbd;border-right-color:#c8c8c8"></div>
<div class="a" style="left:896px;top:214px;width:1022px;height:45px;background:#f6f6f6"></div>
<div class="a" style="left:896px;top:260px;width:10px;height:187px;background:#f3f3f3"></div>
<div class="a" style="left:907px;top:260px;width:1011px;height:46px;background:#d9f0ff"></div>
<div class="a" style="left:907px;top:307px;width:1011px;height:46px;background:#ddfae4"></div>
<div class="a" style="left:907px;top:354px;width:1011px;height:46px;background:#d9f0ff"></div>
<div class="a" style="left:907px;top:401px;width:1011px;height:46px;background:#ddfae4"></div>
<div class="hl" style="left:896px;top:259px;width:1022px"></div>
<div class="hl" style="left:896px;top:306px;width:1022px"></div>
<div class="hl" style="left:896px;top:353px;width:1022px"></div>
<div class="hl" style="left:896px;top:400px;width:1022px"></div>
<div class="hl" style="left:896px;top:447px;width:1022px"></div>
<div class="vl" style="left:906px;top:214px;height:233px"></div>
<div class="vl" style="left:1367px;top:214px;height:45px"></div>
<div class="vl" style="left:1507px;top:214px;height:45px"></div>
<div class="vl" style="left:1644px;top:214px;height:45px"></div>
<div class="vl" style="left:1743px;top:214px;height:45px"></div>
<div class="a" style="left:899px;top:420px;width:0;height:0;border-top:4px solid transparent;border-bottom:4px solid transparent;border-left:4px solid #555"></div>
<div class="a" style="left:895px;top:892px;width:1024px;height:43px;background:#f5f5f5;border-top:1px solid #c8c8c8"></div>
<div class="inp" style="left:909px;top:895px;width:457px;height:37px"></div>
<div class="inp" style="left:1370px;top:895px;width:137px;height:37px"></div>
<div class="inp" style="left:1647px;top:895px;width:96px;height:37px"></div>
<div class="a blue" style="left:895px;top:935px;width:1024px;height:26px"></div>
<div class="inp" style="left:896px;top:980px;width:249px"></div>
<div class="inp" style="left:1152px;top:980px;width:249px"></div>
<div class="inp" style="left:1408px;top:980px;width:248px;background:#3aaa35;border-color:#2f8f2b"></div>
<div class="arr" style="left:1127px;top:992px"></div>
<div class="arr" style="left:1383px;top:992px"></div>
<div class="arr" style="left:1640px;top:997px;border-width:3px 3px 0 3px;border-top-color:#5a8a55"></div>
<div class="arr" style="left:1640px;top:987px;border-width:0 3px 3px 3px;border-top-color:transparent;border-bottom:3px solid #5a8a55"></div>
<div class="btn" style="left:895px;background:#a5ec96"></div>
<div class="btn" style="left:1151px;background:#ffffa0"></div>
<div class="btn" style="left:1407px;background:#ffdca0"></div>
<div class="btn" style="left:1663px;background:#ffa0a0"></div>
<div class="t" style="top:129.77px;font:normal 18px/18px 'Liberation Sans', sans-serif;color:#fff;letter-spacing:0.148px;left:-188.93px;width:600px;text-align:center;">Fraen Kleeder</div>
<div class="t" style="top:247.69px;font:normal 11px/11px 'Liberation Sans', sans-serif;color:#fff;letter-spacing:0.212px;left:18.00px;">Kategorie</div>
<div class="t" style="top:247.69px;font:normal 11px/11px 'Liberation Sans', sans-serif;color:#fff;right:1716.00px;">(4)</div>
<div class="t" style="top:129.77px;font:normal 18px/18px 'Liberation Sans', sans-serif;color:#fff;letter-spacing:0.494px;left:19.25px;width:600px;text-align:center;">Männer Kleeder</div>
<div class="t" style="top:247.69px;font:normal 11px/11px 'Liberation Sans', sans-serif;color:#fff;letter-spacing:0.212px;left:226.00px;">Kategorie</div>
<div class="t" style="top:247.69px;font:normal 11px/11px 'Liberation Sans', sans-serif;color:#fff;right:1508.00px;">(3)</div>
<div class="t" style="top:129.77px;font:normal 18px/18px 'Liberation Sans', sans-serif;color:#fff;letter-spacing:0.279px;left:227.14px;width:600px;text-align:center;">Kanner Kleeder</div>
<div class="t" style="top:247.69px;font:normal 11px/11px 'Liberation Sans', sans-serif;color:#fff;letter-spacing:0.212px;left:434.00px;">Kategorie</div>
<div class="t" style="top:247.69px;font:normal 11px/11px 'Liberation Sans', sans-serif;color:#fff;right:1300.00px;">(1)</div>
<div class="t" style="top:117.77px;font:normal 18px/18px 'Liberation Sans', sans-serif;color:#fff;letter-spacing:0.380px;left:435.19px;width:600px;text-align:center;">Liewensmëttel</div>
<div class="t" style="top:142.77px;font:normal 18px/18px 'Liberation Sans', sans-serif;color:#fff;letter-spacing:0.549px;left:435.27px;width:600px;text-align:center;">Produiten</div>
<div class="t" style="top:247.69px;font:normal 11px/11px 'Liberation Sans', sans-serif;color:#fff;letter-spacing:0.212px;left:642.00px;">Kategorie</div>
<div class="t" style="top:247.69px;font:normal 11px/11px 'Liberation Sans', sans-serif;color:#fff;right:1092.00px;">(25)</div>
<div class="t" style="top:307.77px;font:normal 18px/18px 'Liberation Sans', sans-serif;color:#fff;letter-spacing:0.424px;left:-188.79px;width:600px;text-align:center;">Blummen</div>
<div class="t" style="top:425.69px;font:normal 11px/11px 'Liberation Sans', sans-serif;color:#fff;letter-spacing:0.212px;left:18.00px;">Kategorie</div>
<div class="t" style="top:425.69px;font:normal 11px/11px 'Liberation Sans', sans-serif;color:#fff;right:1716.00px;">(3)</div>
<div class="t" style="top:307.77px;font:normal 18px/18px 'Liberation Sans', sans-serif;color:#fff;letter-spacing:0.661px;left:19.33px;width:600px;text-align:center;">Apdikt</div>
<div class="t" style="top:425.69px;font:normal 11px/11px 'Liberation Sans', sans-serif;color:#fff;letter-spacing:0.212px;left:226.00px;">Kategorie</div>
<div class="t" style="top:425.69px;font:normal 11px/11px 'Liberation Sans', sans-serif;color:#fff;right:1508.00px;">(13)</div>
<div class="t" style="top:307.77px;font:normal 18px/18px 'Liberation Sans', sans-serif;color:#fff;letter-spacing:0.479px;left:227.24px;width:600px;text-align:center;">Stot Wueren</div>
<div class="t" style="top:425.69px;font:normal 11px/11px 'Liberation Sans', sans-serif;color:#fff;letter-spacing:0.212px;left:434.00px;">Kategorie</div>
<div class="t" style="top:425.69px;font:normal 11px/11px 'Liberation Sans', sans-serif;color:#fff;right:1300.00px;">(12)</div>
<div class="t" style="top:307.77px;font:normal 18px/18px 'Liberation Sans', sans-serif;color:#fff;letter-spacing:0.797px;left:435.40px;width:600px;text-align:center;">Optik</div>
<div class="t" style="top:425.69px;font:normal 11px/11px 'Liberation Sans', sans-serif;color:#fff;letter-spacing:0.212px;left:642.00px;">Kategorie</div>
<div class="t" style="top:425.69px;font:normal 11px/11px 'Liberation Sans', sans-serif;color:#fff;right:1092.00px;">(6)</div>
<div class="t" style="top:463.77px;font:normal 18px/18px 'Liberation Sans', sans-serif;color:#fff;letter-spacing:0.104px;left:18.50px;">Blo Kleed</div>
<div class="t" style="top:590.69px;font:normal 11px/11px 'Liberation Sans', sans-serif;color:#fff;letter-spacing:-0.269px;left:18.50px;">20.00 USD</div>
<div class="t" style="top:603.69px;font:normal 11px/11px 'Liberation Sans', sans-serif;color:#fff;letter-spacing:0.178px;left:18.50px;">172.000 Unitéiten</div>
<div class="t" style="top:463.77px;font:normal 18px/18px 'Liberation Sans', sans-serif;color:#fff;letter-spacing:0.466px;left:434.50px;">Blo Männer Kostüm</div>
<div class="t" style="top:590.69px;font:normal 11px/11px 'Liberation Sans', sans-serif;color:#fff;letter-spacing:-0.269px;left:434.50px;">15.00 USD</div>
<div class="t" style="top:603.69px;font:normal 11px/11px 'Liberation Sans', sans-serif;color:#fff;letter-spacing:0.173px;left:434.50px;">5.000 Unitéiten</div>
<div class="t" style="top:641.77px;font:normal 18px/18px 'Liberation Sans', sans-serif;color:#fff;letter-spacing:0.194px;left:18.50px;">Giel Kleed</div>
<div class="t" style="top:768.69px;font:normal 11px/11px 'Liberation Sans', sans-serif;color:#fff;letter-spacing:-0.268px;left:18.50px;">9.50 USD</div>
<div class="t" style="top:781.69px;font:normal 11px/11px 'Liberation Sans', sans-serif;color:#fff;letter-spacing:0.175px;left:18.50px;">56.000 Unitéiten</div>
<div class="t" style="top:641.77px;font:normal 18px/18px 'Liberation Sans', sans-serif;color:#fff;letter-spacing:0.469px;left:434.50px;">Gréng Männer Kostüm</div>
<div class="t" style="top:768.69px;font:normal 11px/11px 'Liberation Sans', sans-serif;color:#fff;letter-spacing:-0.269px;left:434.50px;">15.00 USD</div>
<div class="t" style="top:781.69px;font:normal 11px/11px 'Liberation Sans', sans-serif;color:#fff;letter-spacing:0.175px;left:434.50px;">15.000 Unitéiten</div>
<div class="t" style="top:819.77px;font:normal 18px/18px 'Liberation Sans', sans-serif;color:#fff;letter-spacing:-0.106px;left:18.50px;">Rosa Kleed</div>
<div class="t" style="top:946.69px;font:normal 11px/11px 'Liberation Sans', sans-serif;color:#fff;letter-spacing:-0.268px;left:18.50px;">9.00 USD</div>
<div class="t" style="top:959.69px;font:normal 11px/11px 'Liberation Sans', sans-serif;color:#fff;letter-spacing:0.173px;left:18.50px;">4.000 Unitéiten</div>
<div class="t" style="top:819.77px;font:normal 18px/18px 'Liberation Sans', sans-serif;color:#fff;letter-spacing:0.359px;left:434.50px;">Schwaarz Männer Kostüm</div>
<div class="t" style="top:946.69px;font:normal 11px/11px 'Liberation Sans', sans-serif;color:#fff;letter-spacing:-0.269px;left:434.50px;">15.00 USD</div>
<div class="t" style="top:959.69px;font:normal 11px/11px 'Liberation Sans', sans-serif;color:#fff;letter-spacing:0.175px;left:434.50px;">70.000 Unitéiten</div>
<div class="t" style="top:8.86px;font:normal 27px/27px 'Liberation Sans', sans-serif;color:#fff;letter-spacing:0.076px;left:1107.54px;width:600px;text-align:center;">Verkaf</div>
<div class="t" style="top:7.86px;font:normal 27px/27px 'Liberation Sans', sans-serif;color:#fff;letter-spacing:-0.043px;left:140.98px;width:600px;text-align:center;">Wielt Produkt</div>
<div class="t" style="top:55.69px;font:normal 11px/11px 'DejaVu Sans Condensed', 'DejaVu Sans', sans-serif;color:#23232d;letter-spacing:-0.137px;left:898.00px;">Verkeefer</div>
<div class="t" style="top:86.89px;font:normal 11px/11px 'DejaVu Sans Condensed', 'DejaVu Sans', sans-serif;color:#23232d;letter-spacing:-0.234px;left:898.00px;">Client (F10)</div>
<div class="t" style="top:53.85px;font:bold 12px/12px 'DejaVu Sans Condensed', 'DejaVu Sans', sans-serif;color:#b4b4b4;letter-spacing:0.084px;left:1026.00px;">Employé #2</div>
<div class="t" style="top:53.85px;font:bold 12px/12px 'DejaVu Sans Condensed', 'DejaVu Sans', sans-serif;color:#b4b4b4;letter-spacing:0.344px;left:1474.00px;">Juristeschen Numm</div>
<div class="t" style="top:84.85px;font:bold 12px/12px 'DejaVu Sans Condensed', 'DejaVu Sans', sans-serif;color:#b4b4b4;letter-spacing:0.370px;left:1474.00px;">09.12.2022</div>
<div class="t" style="top:115.85px;font:bold 12px/12px 'DejaVu Sans Condensed', 'DejaVu Sans', sans-serif;color:#2a2a2a;letter-spacing:0.321px;left:898.00px;">Standard Client, Ouni Rabatt</div>
<div class="t" style="top:144.35px;font:bold 12px/12px 'DejaVu Sans Condensed', 'DejaVu Sans', sans-serif;color:#fff;letter-spacing:0.489px;left:1106.74px;width:600px;text-align:center;">Verkafslëscht</div>
<div class="t" style="top:168.69px;font:normal 11px/11px 'DejaVu Sans Condensed', 'DejaVu Sans', sans-serif;color:#23232d;letter-spacing:-0.121px;left:899.00px;">Betrag (F7) и Barcode (F8)</div>
<div class="t" style="top:168.69px;font:normal 11px/11px 'DejaVu Sans Condensed', 'DejaVu Sans', sans-serif;color:#23232d;letter-spacing:-0.410px;left:1472.00px;">Produkt Numm</div>
<div class="t" style="top:186.93px;font:bold 19px/19px 'DejaVu Sans Condensed', 'DejaVu Sans', sans-serif;color:#2d2d2d;letter-spacing:-0.416px;left:902.30px;">1.000</div>
<div class="t" style="top:188.46px;font:normal 16px/16px 'DejaVu Sans Condensed', 'DejaVu Sans', sans-serif;color:#444;left:1005.00px;">x</div>
<div class="t" style="top:186.93px;font:bold 19px/19px 'DejaVu Sans Condensed', 'DejaVu Sans', sans-serif;color:#2d2d2d;letter-spacing:0.144px;left:1026.00px;">0000000000000</div>
<div class="t" style="top:230.46px;font:normal 16px/16px 'DejaVu Sans Condensed', 'DejaVu Sans', sans-serif;color:#2b2b33;letter-spacing:-0.484px;left:909.00px;">Numm</div>
<div class="t" style="top:230.46px;font:normal 16px/16px 'DejaVu Sans Condensed', 'DejaVu Sans', sans-serif;color:#2b2b33;letter-spacing:-0.286px;left:1370.00px;">Rabatt</div>
<div class="t" style="top:230.46px;font:normal 16px/16px 'DejaVu Sans Condensed', 'DejaVu Sans', sans-serif;color:#2b2b33;letter-spacing:-0.128px;left:1510.00px;">Präis</div>
<div class="t" style="top:230.46px;font:normal 16px/16px 'DejaVu Sans Condensed', 'DejaVu Sans', sans-serif;color:#2b2b33;letter-spacing:-0.542px;left:1647.00px;">Betrag</div>
<div class="t" style="top:230.46px;font:normal 16px/16px 'DejaVu Sans Condensed', 'DejaVu Sans', sans-serif;color:#2b2b33;letter-spacing:-0.430px;left:1746.00px;">Zomm</div>
<div class="t" style="top:276.46px;font:normal 16px/16px 'DejaVu Sans Condensed', 'DejaVu Sans', sans-serif;color:#2b2b33;letter-spacing:-0.157px;left:909.00px;">1. Blo Kleed, 10004, Unitéiten</div>
<div class="t" style="top:276.46px;font:normal 16px/16px 'DejaVu Sans Condensed', 'DejaVu Sans', sans-serif;color:#2b2b33;letter-spacing:-0.160px;right:414.16px;">0.00</div>
<div class="t" style="top:276.46px;font:normal 16px/16px 'DejaVu Sans Condensed', 'DejaVu Sans', sans-serif;color:#2b2b33;letter-spacing:-0.165px;right:277.16px;">20.00</div>
<div class="t" style="top:276.46px;font:normal 16px/16px 'DejaVu Sans Condensed', 'DejaVu Sans', sans-serif;color:#2b2b33;letter-spacing:-0.165px;right:178.16px;">1.000</div>
<div class="t" style="top:276.46px;font:normal 16px/16px 'DejaVu Sans Condensed', 'DejaVu Sans', sans-serif;color:#2b2b33;letter-spacing:-0.165px;right:4.16px;">20.00</div>
<div class="t" style="top:323.46px;font:normal 16px/16px 'DejaVu Sans Condensed', 'DejaVu Sans', sans-serif;color:#2b2b33;letter-spacing:-0.162px;left:909.00px;">2. Giel Kleed, 10005, Unitéiten</div>
<div class="t" style="top:323.46px;font:normal 16px/16px 'DejaVu Sans Condensed', 'DejaVu Sans', sans-serif;color:#2b2b33;letter-spacing:-0.160px;right:414.16px;">0.00</div>
<div class="t" style="top:323.46px;font:normal 16px/16px 'DejaVu Sans Condensed', 'DejaVu Sans', sans-serif;color:#2b2b33;letter-spacing:-0.160px;right:277.16px;">9.50</div>
<div class="t" style="top:323.46px;font:normal 16px/16px 'DejaVu Sans Condensed', 'DejaVu Sans', sans-serif;color:#2b2b33;letter-spacing:-0.165px;right:178.16px;">1.000</div>
<div class="t" style="top:323.46px;font:normal 16px/16px 'DejaVu Sans Condensed', 'DejaVu Sans', sans-serif;color:#2b2b33;letter-spacing:-0.160px;right:4.16px;">9.50</div>
<div class="t" style="top:370.46px;font:normal 16px/16px 'DejaVu Sans Condensed', 'DejaVu Sans', sans-serif;color:#2b2b33;letter-spacing:-0.143px;left:909.00px;">3. Rosa Kleed, 10006, Unitéiten</div>
<div class="t" style="top:370.46px;font:normal 16px/16px 'DejaVu Sans Condensed', 'DejaVu Sans', sans-serif;color:#2b2b33;letter-spacing:-0.160px;right:414.16px;">0.00</div>
<div class="t" style="top:370.46px;font:normal 16px/16px 'DejaVu Sans Condensed', 'DejaVu Sans', sans-serif;color:#2b2b33;letter-spacing:-0.160px;right:277.16px;">9.00</div>
<div class="t" style="top:370.46px;font:normal 16px/16px 'DejaVu Sans Condensed', 'DejaVu Sans', sans-serif;color:#2b2b33;letter-spacing:-0.165px;right:178.16px;">1.000</div>
<div class="t" style="top:370.46px;font:normal 16px/16px 'DejaVu Sans Condensed', 'DejaVu Sans', sans-serif;color:#2b2b33;letter-spacing:-0.160px;right:4.16px;">9.00</div>
<div class="t" style="top:417.46px;font:normal 16px/16px 'DejaVu Sans Condensed', 'DejaVu Sans', sans-serif;color:#2b2b33;letter-spacing:-0.171px;left:909.00px;">4. Schwaarz Männer Kostüm, 10001, Unitéiten</div>
<div class="t" style="top:417.46px;font:normal 16px/16px 'DejaVu Sans Condensed', 'DejaVu Sans', sans-serif;color:#2b2b33;letter-spacing:-0.160px;right:414.16px;">0.00</div>
<div class="t" style="top:417.46px;font:normal 16px/16px 'DejaVu Sans Condensed', 'DejaVu Sans', sans-serif;color:#2b2b33;letter-spacing:-0.165px;right:277.16px;">15.00</div>
<div class="t" style="top:417.46px;font:normal 16px/16px 'DejaVu Sans Condensed', 'DejaVu Sans', sans-serif;color:#2b2b33;letter-spacing:-0.165px;right:178.16px;">1.000</div>
<div class="t" style="top:417.46px;font:normal 16px/16px 'DejaVu Sans Condensed', 'DejaVu Sans', sans-serif;color:#2b2b33;letter-spacing:-0.165px;right:4.16px;">15.00</div>
<div class="t" style="top:903.81px;font:bold 21.5px/21.5px 'DejaVu Sans Condensed', 'DejaVu Sans', sans-serif;color:#2d2d2d;letter-spacing:-0.537px;left:915.70px;">53.50</div>
<div class="t" style="top:903.81px;font:bold 21.5px/21.5px 'DejaVu Sans Condensed', 'DejaVu Sans', sans-serif;color:#2d2d2d;right:420.00px;">0</div>
<div class="t" style="top:903.81px;font:bold 21.5px/21.5px 'DejaVu Sans Condensed', 'DejaVu Sans', sans-serif;color:#2d2d2d;right:184.00px;">4</div>
<div class="t" style="top:942.35px;font:bold 12px/12px 'DejaVu Sans Condensed', 'DejaVu Sans', sans-serif;color:#fff;letter-spacing:0.430px;left:1106.71px;width:600px;text-align:center;">Bezuelen</div>
<div class="t" style="top:966.69px;font:normal 11px/11px 'DejaVu Sans Condensed', 'DejaVu Sans', sans-serif;color:#23232d;letter-spacing:-0.180px;left:896.50px;">Printcheck (F11)</div>
<div class="t" style="top:966.69px;font:normal 11px/11px 'DejaVu Sans Condensed', 'DejaVu Sans', sans-serif;color:#23232d;letter-spacing:-0.176px;left:1152.50px;">Bezuelungstyp (F12)</div>
<div class="t" style="top:966.69px;font:normal 11px/11px 'DejaVu Sans Condensed', 'DejaVu Sans', sans-serif;color:#23232d;letter-spacing:-0.384px;left:1408.50px;">Zomm vum Client (F9)</div>
<div class="t" style="top:966.69px;font:normal 11px/11px 'DejaVu Sans Condensed', 'DejaVu Sans', sans-serif;color:#23232d;letter-spacing:-0.178px;left:1664.50px;">Odd Suen</div>
<div class="t" style="top:988.85px;font:bold 12px/12px 'DejaVu Sans Condensed', 'DejaVu Sans', sans-serif;color:#2d2d2d;letter-spacing:0.353px;left:899.00px;">Kee Scheck (F11)</div>
<div class="t" style="top:988.85px;font:bold 12px/12px 'DejaVu Sans Condensed', 'DejaVu Sans', sans-serif;color:#2d2d2d;letter-spacing:0.418px;left:1155.00px;">Cash</div>
<div class="t" style="top:984.93px;font:bold 19px/19px 'DejaVu Sans Condensed', 'DejaVu Sans', sans-serif;color:#3c4a3c;letter-spacing:-0.047px;left:1410.00px;">0.00</div>
<div class="t" style="top:983.93px;font:bold 19px/19px 'DejaVu Sans Condensed', 'DejaVu Sans', sans-serif;color:#2d2d2d;letter-spacing:-0.029px;left:1665.30px;">-53.50</div>
<div class="t" style="top:1032.81px;font:bold 21.5px/21.5px 'DejaVu Sans Condensed', 'DejaVu Sans', sans-serif;color:#000;letter-spacing:-0.461px;left:718.77px;width:600px;text-align:center;">Verkafen</div>
<div class="t" style="top:1032.81px;font:bold 21.5px/21.5px 'DejaVu Sans Condensed', 'DejaVu Sans', sans-serif;color:#000;letter-spacing:-0.730px;left:974.64px;width:600px;text-align:center;">Ausstellen</div>
<div class="t" style="top:1032.81px;font:bold 21.5px/21.5px 'DejaVu Sans Condensed', 'DejaVu Sans', sans-serif;color:#000;letter-spacing:-0.723px;left:1230.64px;width:600px;text-align:center;">Keng Bezuelung</div>
<div class="t" style="top:1032.81px;font:bold 21.5px/21.5px 'DejaVu Sans Condensed', 'DejaVu Sans', sans-serif;color:#000;letter-spacing:-0.713px;left:1486.64px;width:600px;text-align:center;">Ofbriechen</div>
</body></html>
